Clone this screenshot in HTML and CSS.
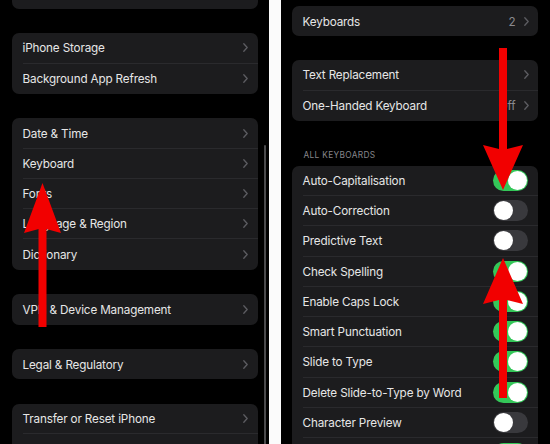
FILE: index.html
```html
<!DOCTYPE html>
<html>
<head>
<meta charset="utf-8">
<link rel="stylesheet" href="styles.css">
</head>
<body>
<div class="screen">
  <section class="panel panel-left">
    <div class="list list-left">
      <div class="group">
        <div class="row"><div class="row-inner"><span class="label">CarPlay</span><svg class="chev" viewBox="0 0 5 9"><polyline points="0.8,0.8 4.2,4.5 0.8,8.2"/></svg></div></div>
      </div>
      <div class="group">
        <div class="row"><div class="row-inner"><span class="label">iPhone Storage</span><svg class="chev" viewBox="0 0 5 9"><polyline points="0.8,0.8 4.2,4.5 0.8,8.2"/></svg></div></div>
        <div class="row"><div class="row-inner"><span class="label">Background App Refresh</span><svg class="chev" viewBox="0 0 5 9"><polyline points="0.8,0.8 4.2,4.5 0.8,8.2"/></svg></div></div>
      </div>
      <div class="group">
        <div class="row"><div class="row-inner"><span class="label">Date &amp; Time</span><svg class="chev" viewBox="0 0 5 9"><polyline points="0.8,0.8 4.2,4.5 0.8,8.2"/></svg></div></div>
        <div class="row"><div class="row-inner"><span class="label">Keyboard</span><svg class="chev" viewBox="0 0 5 9"><polyline points="0.8,0.8 4.2,4.5 0.8,8.2"/></svg></div></div>
        <div class="row"><div class="row-inner"><span class="label">Fonts</span><svg class="chev" viewBox="0 0 5 9"><polyline points="0.8,0.8 4.2,4.5 0.8,8.2"/></svg></div></div>
        <div class="row"><div class="row-inner"><span class="label">Language &amp; Region</span><svg class="chev" viewBox="0 0 5 9"><polyline points="0.8,0.8 4.2,4.5 0.8,8.2"/></svg></div></div>
        <div class="row"><div class="row-inner"><span class="label">Dictionary</span><svg class="chev" viewBox="0 0 5 9"><polyline points="0.8,0.8 4.2,4.5 0.8,8.2"/></svg></div></div>
      </div>
      <div class="group">
        <div class="row"><div class="row-inner"><span class="label">VPN &amp; Device Management</span><svg class="chev" viewBox="0 0 5 9"><polyline points="0.8,0.8 4.2,4.5 0.8,8.2"/></svg></div></div>
      </div>
      <div class="group">
        <div class="row"><div class="row-inner"><span class="label">Legal &amp; Regulatory</span><svg class="chev" viewBox="0 0 5 9"><polyline points="0.8,0.8 4.2,4.5 0.8,8.2"/></svg></div></div>
      </div>
      <div class="group">
        <div class="row"><div class="row-inner"><span class="label">Transfer or Reset iPhone</span><svg class="chev" viewBox="0 0 5 9"><polyline points="0.8,0.8 4.2,4.5 0.8,8.2"/></svg></div></div>
        <div class="row"><div class="row-inner"><span class="label">Shut Down</span></div></div>
      </div>
    </div>
    <div class="scrollbar"></div>
  </section>

  <section class="panel panel-right">
    <div class="list list-right">
      <div class="group">
        <div class="row"><div class="row-inner"><span class="label">Keyboards</span><span class="value">2</span><svg class="chev" viewBox="0 0 5 9"><polyline points="0.8,0.8 4.2,4.5 0.8,8.2"/></svg></div></div>
      </div>
      <div class="group">
        <div class="row"><div class="row-inner"><span class="label">Text Replacement</span><svg class="chev" viewBox="0 0 5 9"><polyline points="0.8,0.8 4.2,4.5 0.8,8.2"/></svg></div></div>
        <div class="row"><div class="row-inner"><span class="label">One-Handed Keyboard</span><span class="value">Off</span><svg class="chev" viewBox="0 0 5 9"><polyline points="0.8,0.8 4.2,4.5 0.8,8.2"/></svg></div></div>
      </div>
      <div class="section">
        <div class="section-header">ALL KEYBOARDS</div>
        <div class="group">
          <div class="row"><div class="row-inner"><span class="label">Auto-Capitalisation</span><span class="toggle on"><span class="knob"></span></span></div></div>
          <div class="row"><div class="row-inner"><span class="label">Auto-Correction</span><span class="toggle"><span class="knob"></span></span></div></div>
          <div class="row"><div class="row-inner"><span class="label">Predictive Text</span><span class="toggle"><span class="knob"></span></span></div></div>
          <div class="row"><div class="row-inner"><span class="label">Check Spelling</span><span class="toggle on"><span class="knob"></span></span></div></div>
          <div class="row"><div class="row-inner"><span class="label">Enable Caps Lock</span><span class="toggle on"><span class="knob"></span></span></div></div>
          <div class="row"><div class="row-inner"><span class="label">Smart Punctuation</span><span class="toggle on"><span class="knob"></span></span></div></div>
          <div class="row"><div class="row-inner"><span class="label">Slide to Type</span><span class="toggle on"><span class="knob"></span></span></div></div>
          <div class="row"><div class="row-inner"><span class="label">Delete Slide-to-Type by Word</span><span class="toggle on"><span class="knob"></span></span></div></div>
          <div class="row"><div class="row-inner"><span class="label">Character Preview</span><span class="toggle"><span class="knob"></span></span></div></div>
          <div class="row"><div class="row-inner"><span class="label">&ldquo;.&rdquo; Shortcut</span><span class="toggle on"><span class="knob"></span></span></div></div>
        </div>
      </div>
    </div>
  </section>

  <svg class="arrows" viewBox="0 0 550 444" width="550" height="444">
    <g fill="#f20000">
      <rect x="38.5" y="226" width="8" height="101"/>
      <polygon points="42.5,183 61,233 42.5,228 24,233"/>
      <rect x="499" y="48" width="8" height="104"/>
      <polygon points="503,190 483,145 503,150 523,145"/>
      <rect x="499" y="298" width="8" height="100"/>
      <polygon points="503,258 523,304 503,299 483,304"/>
    </g>
  </svg>
</div>
</body>
</html>
```

FILE: styles.css
```css
* {
  box-sizing: border-box;
}

html, body {
  margin: 0;
  padding: 0;
}

body {
  width: 550px;
  height: 444px;
  overflow: hidden;
  background: #000;
  font-family: Inter, "Liberation Sans", sans-serif;
}

.screen {
  position: relative;
  width: 550px;
  height: 444px;
  display: flex;
  gap: 12px;
  background: #fbfbfb;
}

.panel {
  position: relative;
  width: 269px;
  height: 444px;
  overflow: hidden;
  background: #000;
}

.list {
  display: flex;
  flex-direction: column;
  gap: 24.6px;
}

.list-left {
  padding: 0 11px 0 12px;
  margin-top: -21.5px;
}

.list-right {
  padding: 6px 12px 0 11px;
  gap: 24px;
}

.group {
  background: #1c1c1e;
  border-radius: 7px;
  overflow: hidden;
}

.row {
  height: 30.25px;
  padding-left: 10.5px;
  display: flex;
}

.row-inner {
  flex: 1;
  display: flex;
  align-items: center;
  border-bottom: 1px solid #2a2a2d;
  padding-right: 10.5px;
  color: #e6e6e6;
  font-size: 11.7px;
  letter-spacing: -0.15px;
}

.row:last-child .row-inner {
  border-bottom: none;
}

.label {
  flex: 1;
  white-space: nowrap;
  padding-top: 1px;
}

.value {
  color: #8a8a8f;
  margin-right: 8px;
  padding-top: 1px;
}

.chev {
  width: 5px;
  height: 9px;
  fill: none;
  stroke: #5c5c61;
  stroke-width: 1.3;
  stroke-linecap: round;
  stroke-linejoin: round;
}

.panel-right .row-inner {
  padding-right: 9.5px;
}

.section {
  display: flex;
  flex-direction: column;
  margin-top: -24px;
}

.section-header {
  height: 45px;
  display: flex;
  align-items: flex-end;
  padding: 0 0 6px 11.5px;
  color: #86868b;
  font-size: 8.3px;
  letter-spacing: 0.35px;
  line-height: 10px;
}

.toggle {
  width: 35px;
  height: 21px;
  border-radius: 10.5px;
  background: #39393d;
  display: flex;
  align-items: center;
  padding: 1px;
  margin-right: 0.5px;
}

.toggle.on {
  background: #34c759;
  justify-content: flex-end;
}

.knob {
  width: 19px;
  height: 19px;
  border-radius: 50%;
  background: #ffffff;
}

.scrollbar {
  position: absolute;
  left: 264px;
  top: 145px;
  width: 2px;
  height: 310px;
  border-radius: 1px;
  background: #4a4a4c;
}

.arrows {
  position: absolute;
  left: 0;
  top: 0;
  pointer-events: none;
}
```
